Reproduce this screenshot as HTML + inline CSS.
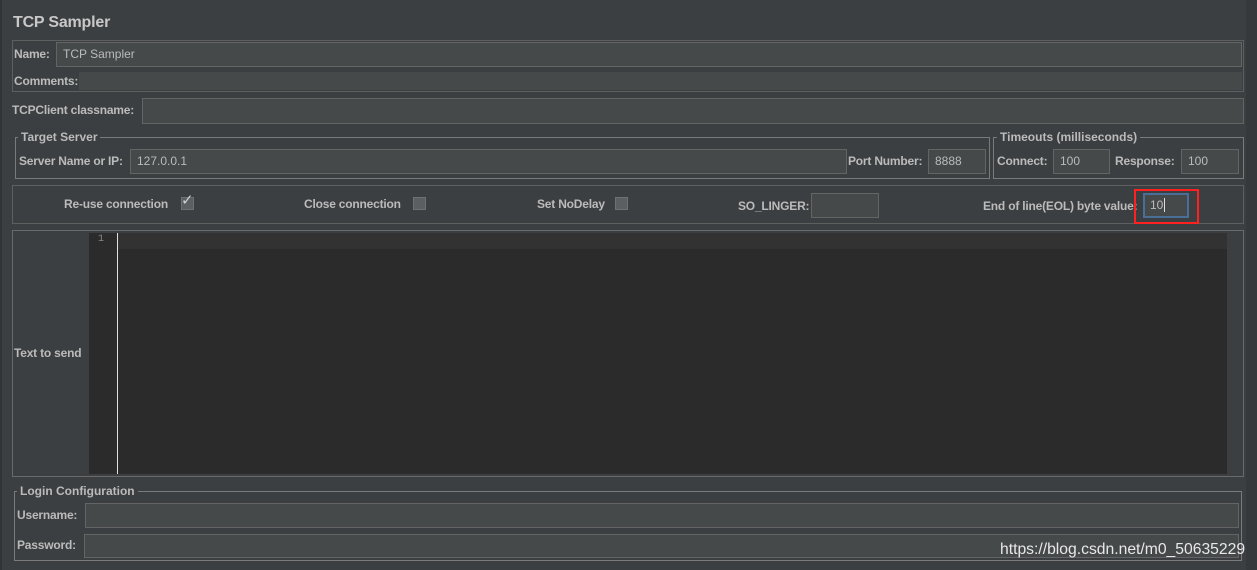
<!DOCTYPE html><html><head><style>
body{margin:0;width:1257px;height:570px;background:#3c3f41;position:relative;overflow:hidden;font-family:"Liberation Sans",Arial,sans-serif;font-size:12px;color:#bbbbbb}
div,span{position:absolute;box-sizing:border-box}
.l{font-weight:bold;white-space:nowrap;line-height:14px;letter-spacing:-0.2px}
.f{background:#45494a;border:1px solid #646464;color:#bbbbbb;padding-left:6px;line-height:22px;font-size:12px}
.b{border:1px solid #5e6060}
.fs{border:1px solid #7a7a7a}
.lg{background:#3c3f41;padding:0 3px;font-weight:bold;line-height:14px}
.cb{width:13px;height:13px;background:#5c5f61;border:1px solid #707070}
</style></head><body>
<div style="left:0;top:0;width:2px;height:570px;background:#313335"></div>
<div style="left:1246px;top:0;width:11px;height:570px;background:#36393b"></div>
<div class="l" style="left:13px;top:14px;font-size:16px;line-height:18px;color:#c8c8c8">TCP Sampler</div>
<div class="b" style="left:12px;top:40px;width:1232px;height:52px"></div>
<div class="l" style="left:14px;top:47px">Name:</div>
<div class="f" style="left:56px;top:42px;width:1186px;height:25px">TCP Sampler</div>
<div class="l" style="left:14px;top:74px">Comments:</div>
<div style="left:79px;top:72px;width:1163px;height:18px;background:#45494a"></div>
<div class="l" style="left:12px;top:103px">TCPClient classname:</div>
<div class="f" style="left:142px;top:98px;width:1102px;height:26px"></div>
<div class="fs" style="left:15px;top:137px;width:975px;height:42px"></div>
<div class="lg" style="left:18px;top:130px">Target Server</div>
<div class="l" style="left:19px;top:154px">Server Name or IP:</div>
<div class="f" style="left:130px;top:149px;width:717px;height:25px">127.0.0.1</div>
<div class="l" style="left:848px;top:154px">Port Number:</div>
<div class="f" style="left:928px;top:149px;width:58px;height:25px">8888</div>
<div class="fs" style="left:993px;top:137px;width:251px;height:42px"></div>
<div class="lg" style="left:997px;top:130px">Timeouts (milliseconds)</div>
<div class="l" style="left:997px;top:154px">Connect:</div>
<div class="f" style="left:1053px;top:149px;width:57px;height:25px">100</div>
<div class="l" style="left:1115px;top:154px">Response:</div>
<div class="f" style="left:1181px;top:149px;width:58px;height:25px">100</div>
<div class="b" style="left:12px;top:185px;width:1232px;height:39px"></div>
<div class="l" style="left:64px;top:197px">Re-use connection</div>
<div class="cb" style="left:181px;top:197px"></div>
<div style="left:181px;top:191px;font-size:15px;color:#d0d0d0">✓</div>
<div class="l" style="left:304px;top:197px">Close connection</div>
<div class="cb" style="left:413px;top:197px"></div>
<div class="l" style="left:537px;top:197px">Set NoDelay</div>
<div class="cb" style="left:615px;top:197px"></div>
<div class="l" style="left:738px;top:199px">SO_LINGER:</div>
<div class="f" style="left:811px;top:193px;width:68px;height:25px"></div>
<div class="l" style="left:983px;top:199px">End of line(EOL) byte value:</div>
<div class="f" style="left:1143px;top:193px;width:46px;height:25px;border:2px solid #4a6e95;padding-left:5px;line-height:20px">10<span style="position:static;border-left:1px solid #ddd;margin-left:1px"></span></div>
<div style="left:1134px;top:189px;width:65px;height:35px;border:2px solid #ff2020"></div>
<div class="b" style="left:12px;top:230px;width:1232px;height:247px;border-color:#6a6a6a"></div>
<div class="l" style="left:14px;top:346px">Text to send</div>
<div style="left:89px;top:233px;width:28px;height:241px;background:#2b2b2b"></div>
<div style="left:98px;top:234px;font-size:10px;color:#888;font-family:'Liberation Mono',monospace">1</div>
<div style="left:117px;top:233px;width:1110px;height:241px;background:#2b2b2b"></div>
<div style="left:117px;top:233px;width:1110px;height:16px;background:#323232"></div>
<div style="left:117px;top:233px;width:1px;height:241px;background:#e0e0e0"></div>
<div style="left:1227px;top:233px;width:14px;height:241px;background:#3c3f41"></div>
<div class="fs" style="left:14px;top:491px;width:1228px;height:70px"></div>
<div class="lg" style="left:17px;top:484px">Login Configuration</div>
<div class="l" style="left:17px;top:508px">Username:</div>
<div class="f" style="left:85px;top:503px;width:1154px;height:25px"></div>
<div class="l" style="left:17px;top:538px">Password:</div>
<div class="f" style="left:84px;top:534px;width:1155px;height:24px"></div>
<div style="left:1000px;top:541px;font-size:15.7px;color:#e8e8e8;white-space:nowrap">https://blog.csdn.net/m0_50635229</div>
</body></html>
